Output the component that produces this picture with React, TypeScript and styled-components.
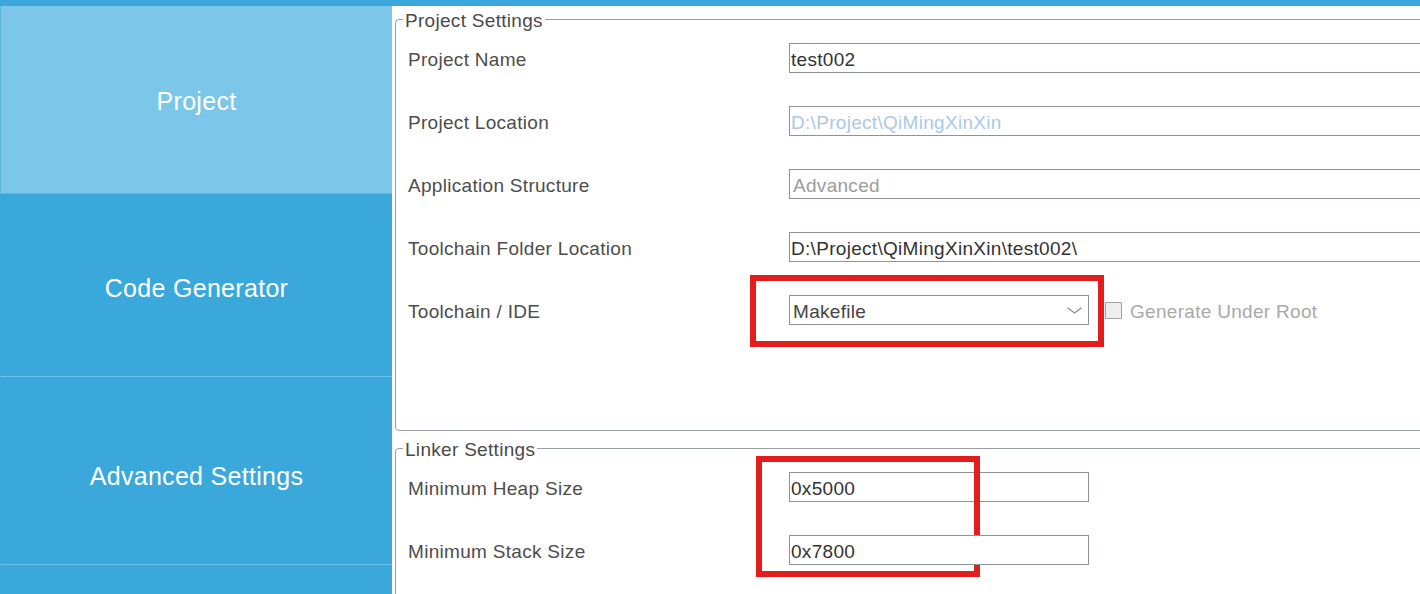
import React from 'react'
import styled, { createGlobalStyle } from 'styled-components'

const GlobalStyle = createGlobalStyle`
  html, body {
    margin: 0;
    padding: 0;
    background: #fff;
    overflow: hidden;
  }
  body {
    font-family: "Liberation Sans", Arial, sans-serif;
  }
`

const navItems = [
  { label: 'Project', height: 188, shift: 3, active: true },
  { label: 'Code Generator', height: 183, shift: 7 },
  { label: 'Advanced Settings', height: 188, shift: 11 },
  { label: '', height: 60, shift: 0 },
]

const App: React.FC = () => {
  return (
    <Shell>
      <GlobalStyle />
      <TopStrip />
      <Body>
        <Sidebar>
          {navItems.map((item, i) => (
            <NavItem key={i} $active={item.active} $height={item.height} $shift={item.shift}>
              {item.label}
            </NavItem>
          ))}
        </Sidebar>
        <Main>
          <Group $bottom={105}>
            <Caption>Project Settings</Caption>
            <Fields>
              <Label>Project Name</Label>
              <TextBox readOnly value="test002" />

              <Label>Project Location</Label>
              <TextBox readOnly value="D:\Project\QiMingXinXin" $tone="disabled" />

              <Label>Application Structure</Label>
              <TextBox readOnly value="Advanced" $tone="muted" />

              <Label>Toolchain Folder Location</Label>
              <TextBox readOnly value="D:\Project\QiMingXinXin\test002\" />

              <Label>Toolchain / IDE</Label>
              <ToolRow>
                <Cell>
                  <Combo>
                    <ComboText>Makefile</ComboText>
                    <svg width="15" height="7" viewBox="0 0 15 7">
                      <polyline points="0.5,0.8 7.5,6 14.5,0.8" fill="none" stroke="#8a8a8a" strokeWidth="1.2" />
                    </svg>
                  </Combo>
                  <Highlight $top={-20} $left={-39} $w={354} $h={72} />
                </Cell>
                <CheckBox />
                <CheckLabel>Generate Under Root</CheckLabel>
              </ToolRow>
            </Fields>
          </Group>

          <Group $bottom={40}>
            <Caption>Linker Settings</Caption>
            <Fields>
              <Label>Minimum Heap Size</Label>
              <Cell>
                <TextBox readOnly value="0x5000" $width="300px" />
                <Highlight $top={-16} $left={-33} $w={224} $h={121} />
              </Cell>

              <Label>Minimum Stack Size</Label>
              <Cell>
                <TextBox readOnly value="0x7800" $width="300px" />
              </Cell>
            </Fields>
          </Group>
        </Main>
      </Body>
    </Shell>
  )
}

const Shell = styled.div`
  width: 1420px;
  height: 594px;
  display: flex;
  flex-direction: column;
  overflow: hidden;
`

const TopStrip = styled.div`
  height: 6px;
  flex-shrink: 0;
  background: #3aa8db;
`

const Body = styled.div`
  display: flex;
  flex: 1;
  min-height: 0;
`

const Sidebar = styled.nav`
  width: 392px;
  flex-shrink: 0;
  background: #3aa8db;
  display: flex;
  flex-direction: column;
`

const NavItem = styled.div<{ $active?: boolean; $height: number; $shift: number }>`
  height: ${(p) => p.$height}px;
  flex-shrink: 0;
  box-sizing: border-box;
  display: flex;
  align-items: center;
  justify-content: center;
  padding-top: ${(p) => p.$shift}px;
  background: ${(p) => (p.$active ? '#7bc6e9' : '#3aa8db')};
  border-left: 1px solid ${(p) => (p.$active ? '#5fb6e1' : '#3aa8db')};
  border-bottom: 1px solid ${(p) => (p.$active ? '#5cb3de' : '#6dbfe7')};
  color: #fff;
  font-size: 25px;
  letter-spacing: 0.3px;
`

const Main = styled.main`
  flex: 1;
  min-width: 0;
  overflow: hidden;
  padding: 2px 0 0 3px;
`

const Group = styled.fieldset<{ $bottom: number }>`
  margin: 0;
  min-width: 0;
  width: calc(100% + 20px);
  box-sizing: border-box;
  border: 1px solid #9aa0a5;
  border-radius: 4px;
  padding: 13px 0 ${(p) => p.$bottom}px 12px;

  & + & {
    margin-top: 6px;
  }
`

const Caption = styled.legend`
  font-size: 19px;
  line-height: 18px;
  color: #4a4a4a;
  letter-spacing: 0.3px;
  padding: 4px 2px 0;
  margin-left: -5px;
`

const Fields = styled.div`
  display: grid;
  grid-template-columns: 381px 1fr;
  row-gap: 33px;
  align-items: center;
`

const Label = styled.div`
  font-size: 19px;
  color: #4d4d4d;
  letter-spacing: 0.3px;
  padding-top: 4px;
`

const tones = {
  normal: '#333',
  muted: '#9c9c9c',
  disabled: '#adc8e6',
}

const TextBox = styled.input<{ $tone?: keyof typeof tones; $width?: string }>`
  display: block;
  width: ${(p) => p.$width ?? '100%'};
  height: 30px;
  box-sizing: border-box;
  margin: 0;
  border: 1px solid #8e9399;
  border-radius: 0;
  padding: 4px ${(p) => (p.$tone === 'muted' ? 3 : 1)}px 0;
  background: #fff;
  outline: none;
  font: 19px "Liberation Sans", Arial, sans-serif;
  letter-spacing: 0.3px;
  color: ${(p) => tones[p.$tone ?? 'normal']};
`

const Cell = styled.div`
  position: relative;
`

const ToolRow = styled.div`
  display: flex;
  align-items: center;
`

const Combo = styled.div`
  width: 300px;
  height: 30px;
  box-sizing: border-box;
  border: 1px solid #8e9399;
  display: flex;
  align-items: center;
  justify-content: space-between;
  padding: 0 6px 0 3px;
  font-size: 19px;
  letter-spacing: 0.3px;
  color: #444;
`

const ComboText = styled.span`
  padding-top: 4px;
`

const CheckBox = styled.span`
  width: 17px;
  height: 17px;
  box-sizing: border-box;
  margin-left: 16px;
  border: 1px solid #a3a3a3;
  background: #eceef0;
`

const CheckLabel = styled.span`
  margin-left: 8px;
  padding-top: 3px;
  font-size: 19px;
  letter-spacing: 0.3px;
  color: #a9a9a9;
`

// red callout frame drawn over a field
const Highlight = styled.div<{ $top: number; $left: number; $w: number; $h: number }>`
  position: absolute;
  top: ${(p) => p.$top}px;
  left: ${(p) => p.$left}px;
  width: ${(p) => p.$w}px;
  height: ${(p) => p.$h}px;
  box-sizing: border-box;
  border: 6px solid #e31c1c;
  pointer-events: none;
`

export default App
